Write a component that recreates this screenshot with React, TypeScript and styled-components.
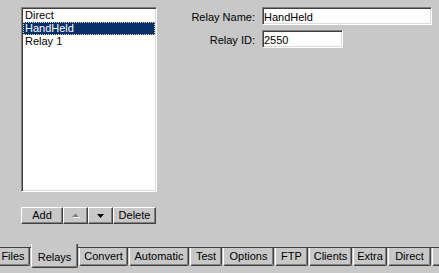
import React from "react";
import styled, { createGlobalStyle } from "styled-components";

const FACE = "#c8c8c8";

const GlobalStyle = createGlobalStyle`
  html, body { margin: 0; padding: 0; background: ${FACE}; }
  body { font-family: "Liberation Sans", Arial, sans-serif; font-size: 11px; }
`;

const Window = styled.div`
  width: 439px;
  height: 273px;
  overflow: hidden;
  background: ${FACE};
  display: flex;
  flex-direction: column;
  font-family: "Liberation Sans", Arial, sans-serif;
  font-size: 11px;
  line-height: 13px;
  color: #000;
`;

const Panel = styled.div`
  height: 248px;
  flex-shrink: 0;
  box-sizing: border-box;
  border-bottom: 1px solid #404040;
  display: flex;
  align-items: flex-start;
  padding: 7px 0 0 21px;
`;

const LeftColumn = styled.div`
  width: 136px;
  display: flex;
  flex-direction: column;
  gap: 15px;
`;

const ListBox = styled.div`
  height: 185px;
  box-sizing: border-box;
  background: #fff;
  border: 1px solid;
  border-color: #808080 #fff #fff #808080;
  box-shadow: inset 1px 1px 0 #404040, inset -1px -1px 0 #dcdcdc;
  padding: 1px;
`;

const ListItem = styled.div<{ $selected?: boolean }>`
  height: 13px;
  box-sizing: border-box;
  line-height: 11px;
  padding-left: 1px;
  border: 1px dotted ${(p) => (p.$selected ? "#e8d49a" : "transparent")};
  background: ${(p) => (p.$selected ? "#08306a" : "transparent")};
  color: ${(p) => (p.$selected ? "#fff" : "#000")};
  white-space: nowrap;
`;

const ButtonRow = styled.div`
  display: flex;
`;

const Button = styled.button<{ $w: number }>`
  width: ${(p) => p.$w}px;
  height: 17px;
  box-sizing: border-box;
  padding: 0;
  margin: 0;
  background: ${FACE};
  border: 1px solid;
  border-color: #fff #404040 #404040 #fff;
  box-shadow: inset -1px -1px 0 #808080;
  font-family: "Liberation Sans", Arial, sans-serif;
  font-size: 11px;
  line-height: 13px;
  color: #000;
  display: flex;
  align-items: center;
  justify-content: center;
`;

const Form = styled.div`
  margin-left: 1px;
  display: grid;
  grid-template-columns: 97px auto;
  column-gap: 7px;
  row-gap: 5px;
  align-items: start;
`;

const Label = styled.label`
  text-align: right;
  padding-top: 4px;
  white-space: nowrap;
`;

const Field = styled.input<{ $w: number }>`
  width: ${(p) => p.$w}px;
  height: 18px;
  box-sizing: border-box;
  margin: 0;
  padding: 2px 1px 0 1px;
  background: #fff;
  border: 1px solid;
  border-color: #808080 #fff #fff #808080;
  box-shadow: inset 1px 1px 0 #404040, inset -1px -1px 0 #dcdcdc;
  font-family: "Liberation Sans", Arial, sans-serif;
  font-size: 11px;
  line-height: 13px;
  color: #000;
  outline: none;
`;

const TabStrip = styled.div`
  display: flex;
  align-items: flex-start;
  margin-left: -4px;
`;

const Tab = styled.div<{ $w: number; $selected?: boolean }>`
  flex-shrink: 0;
  width: ${(p) => p.$w}px;
  height: ${(p) => (p.$selected ? 24 : 18)}px;
  margin-top: ${(p) => (p.$selected ? -4 : 0)}px;
  margin-right: 1px;
  padding-top: ${(p) => (p.$selected ? 7 : 2)}px;
  box-sizing: border-box;
  position: relative;
  z-index: ${(p) => (p.$selected ? 1 : 0)};
  background: ${FACE};
  border-left: 1px solid #fff;
  border-right: 1px solid #404040;
  border-bottom: 1px solid #404040;
  border-radius: 0 0 2px 2px;
  box-shadow: inset -1px -1px 0 #808080;
  text-align: center;
  white-space: nowrap;
  overflow: hidden;
`;

const UpArrow = () => (
  <svg width="8" height="5" viewBox="0 0 8 5">
    <polygon points="1,5 8,5 4.5,1.5" fill="#fff" />
    <polygon points="0,4 7,4 3.5,0.5" fill="#808080" />
  </svg>
);

const DownArrow = () => (
  <svg width="7" height="4" viewBox="0 0 7 4">
    <polygon points="0,0 7,0 3.5,4" fill="#000" />
  </svg>
);

const items = ["Direct", "HandHeld", "Relay 1"];

const tabs: { label: string; w: number }[] = [
  { label: "Files", w: 34 },
  { label: "Relays", w: 47 },
  { label: "Convert", w: 49 },
  { label: "Automatic", w: 60 },
  { label: "Test", w: 32 },
  { label: "Options", w: 51 },
  { label: "FTP", w: 33 },
  { label: "Clients", w: 43 },
  { label: "Extra", w: 34 },
  { label: "Direct", w: 43 },
  { label: "", w: 40 },
];

export default function App() {
  return (
    <>
      <GlobalStyle />
      <Window>
        <Panel>
          <LeftColumn>
            <ListBox>
              {items.map((it) => (
                <ListItem key={it} $selected={it === "HandHeld"}>
                  {it}
                </ListItem>
              ))}
            </ListBox>
            <ButtonRow>
              <Button $w={42}>Add</Button>
              <Button $w={25} disabled>
                <UpArrow />
              </Button>
              <Button $w={25}>
                <DownArrow />
              </Button>
              <Button $w={43}>Delete</Button>
            </ButtonRow>
          </LeftColumn>
          <Form>
            <Label htmlFor="relay-name">Relay Name:</Label>
            <Field id="relay-name" $w={170} defaultValue="HandHeld" readOnly />
            <Label htmlFor="relay-id">Relay ID:</Label>
            <Field id="relay-id" $w={81} defaultValue="2550" readOnly />
          </Form>
        </Panel>
        <TabStrip>
          {tabs.map((t, i) => (
            <Tab key={i} $w={t.w} $selected={t.label === "Relays"}>
              {t.label}
            </Tab>
          ))}
        </TabStrip>
      </Window>
    </>
  );
}
